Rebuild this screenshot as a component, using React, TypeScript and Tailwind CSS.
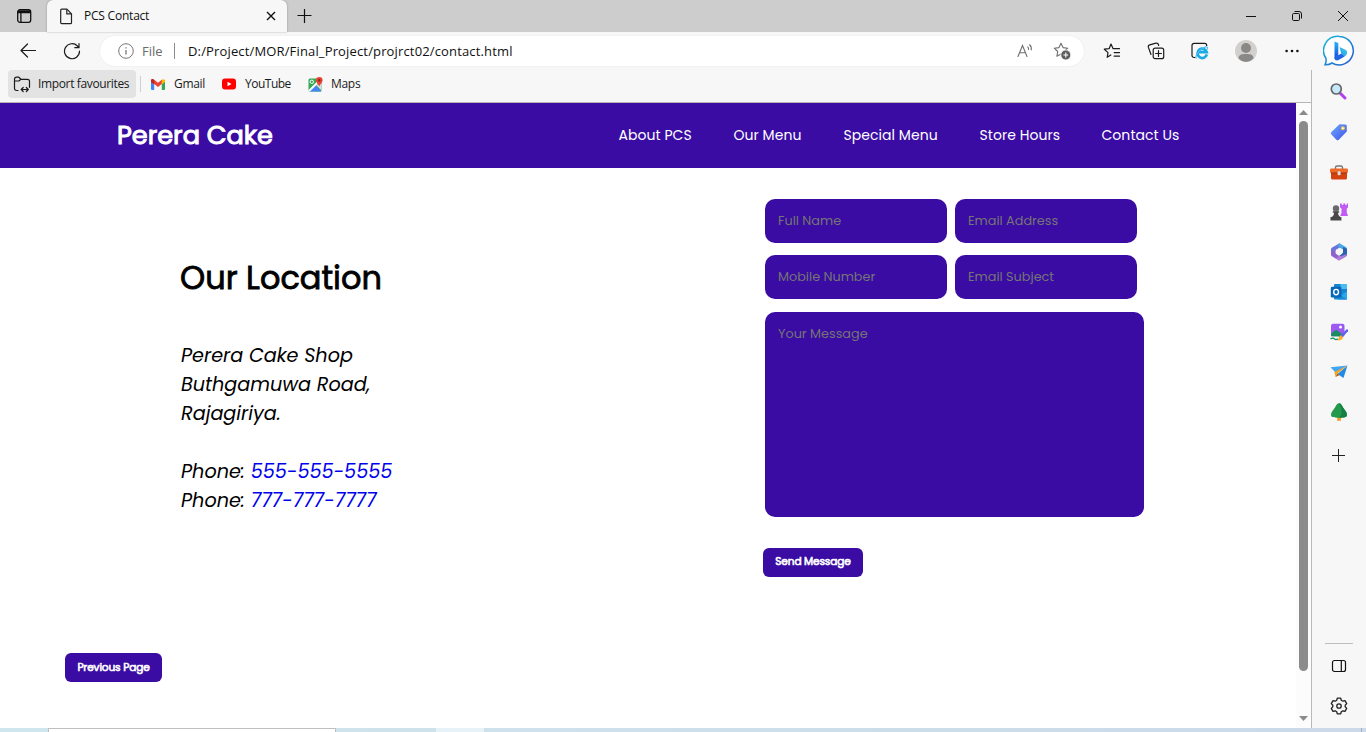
import React from "react";

const INK = "#1b1b1b";

function TabStrip() {
  return (
    <div className="flex h-8 shrink-0 items-center bg-[#cdcdcd]">
      <div className="flex w-[47px] items-center justify-center">
        <svg width="16" height="16" viewBox="0 0 16 16" fill="none" stroke="#111" strokeWidth="1.3">
          <rect x="1.7" y="1.7" width="13" height="12.6" rx="2.2" />
          <path d="M2.600 3h11.200v1.500H2.600z" fill="#111" />
          <path d="M4.9 5v9" />
        </svg>
      </div>
      <div className="flex h-8 w-[240px] items-center rounded-t-md bg-[#f7f7f7] pl-3 shadow-[0_0_2px_rgba(0,0,0,0.35)]">
        <svg width="14" height="17" viewBox="0 0 14 17" fill="none" stroke="#222" strokeWidth="1.2" strokeLinejoin="round">
          <path d="M1.7 2.2a1 1 0 0 1 1-1h5.2l4.6 4.6v8.9a1 1 0 0 1-1 1H2.7a1 1 0 0 1-1-1z" />
          <path d="M7.8 1.4v4.5h4.5" />
        </svg>
        <span className="ml-[11px] w-[178px] whitespace-nowrap text-[12px] leading-4 tracking-[-0.22px] text-[#111]">PCS Contact</span>
        <svg width="10" height="10" viewBox="0 0 10 10" stroke="#111" strokeWidth="1.4" className="ml-1">
          <path d="M1 1l8 8M9 1L1 9" />
        </svg>
      </div>
      <svg width="16" height="16" viewBox="0 0 16 16" stroke="#111" strokeWidth="1.2" className="ml-[10px]">
        <path d="M7.5 1v14M.5 7.5h14" />
      </svg>
      <div className="ml-auto flex">
        <div className="flex w-[46px] items-center justify-center">
          <svg width="10" height="12" viewBox="0 0 10 12" stroke="#111"><path d="M0 6.5h10" /></svg>
        </div>
        <div className="flex w-[46px] items-center justify-center">
          <svg width="12" height="12" viewBox="0 0 12 12" fill="none" stroke="#111">
            <rect x="1.5" y="3.5" width="7" height="7" rx="1.2" />
            <path d="M3.5 1.5H8a2.5 2.5 0 0 1 2.5 2.5v4.5" />
          </svg>
        </div>
        <div className="flex w-[46px] items-center justify-center">
          <svg width="12" height="12" viewBox="0 0 12 12" stroke="#111"><path d="M1 1l10 10M11 1L1 11" /></svg>
        </div>
      </div>
    </div>
  );
}

const STAR = "M8 1.3l2 4.3 4.7.6-3.4 3.3.8 4.7L8 12l-4.1 2.2.8-4.7L1.3 6.2 6 5.6z";

function Toolbar() {
  return (
    <div className="flex h-[38px] shrink-0 items-center pl-[6px]">
      <div className="flex w-11 items-center justify-center">
        <svg width="18" height="16" viewBox="0 0 18 16" fill="none" stroke={INK} strokeWidth="1.2" strokeLinecap="round" strokeLinejoin="round">
          <path d="M16.500 7.500H2M8.500 1L2 7.500 8.500 14" />
        </svg>
      </div>
      <div className="flex w-11 items-center justify-center">
        <svg width="18" height="18" viewBox="0 0 18 18" fill="none" stroke={INK} strokeWidth="1.2" strokeLinecap="round" strokeLinejoin="round">
          <path d="M16.5 9.2A7.5 7.5 0 1 1 14.4 4L16 5.7M16 1.5v4.2h-4.2" />
        </svg>
      </div>
      <div className="ml-[6px] flex h-[30px] w-[984px] shrink-0 items-center rounded-full bg-white pl-[18px] shadow-[0_0_2px_rgba(0,0,0,0.08)]">
        <svg width="16" height="16" viewBox="0 0 16 16" fill="none" stroke="#777">
          <circle cx="8" cy="8" r="7.3" />
          <path d="M8 7v4.6M8 4.2v1.3" strokeWidth="1.3" />
        </svg>
        <span className="ml-2 w-8 whitespace-nowrap text-[13px] leading-4 text-[#6a6a6a]">File</span>
        <span className="h-4 w-px bg-[#8a8a8a]" />
        <span className="ml-[13px] whitespace-nowrap text-[13px] leading-4 tracking-[0.15px] text-[#111]">D:/Project/MOR/Final_Project/projrct02/contact.html</span>
        <div className="ml-auto flex items-center pr-[13px]">
          <svg width="17" height="16" viewBox="0 0 17 16" fill="none" stroke="#6f6f6f" strokeWidth="1.1" strokeLinecap="round">
            <path d="M1 13.500L5.500 2.500l4.500 11M2.500 9.700h6M10.800 3.800c.8.800.9 1.700.7 2.700M12.600 1.800c1.600 1.300 2 3.100 1.600 5.100" />
          </svg>
          <svg width="18" height="18" viewBox="0 0 18 18" fill="none" stroke="#6f6f6f" strokeWidth="1.1" strokeLinejoin="round" className="ml-[19px]">
            <path d={STAR} />
            <circle cx="12.8" cy="13" r="5" fill="#5e5e5e" stroke="#fff" strokeWidth=".8" />
            <path d="M12.8 10.6v4.8M10.4 13h4.8" stroke="#fff" />
          </svg>
        </div>
      </div>
      <div className="ml-[6px] flex w-11 items-center justify-center">
        <svg width="18" height="16" viewBox="0 0 18 16" fill="none" stroke={INK} strokeWidth="1.2" strokeLinejoin="round" strokeLinecap="round">
          <path d="M7.800 12l-3.600 2.300.8-4.700L1.300 6.200l4.800-.5L8 1l2.100 4.700h6.400M11.200 9.600h5.300M11.200 13.200h5.300" />
        </svg>
      </div>
      <div className="flex w-11 items-center justify-center">
        <svg width="18" height="18" viewBox="0 0 18 18" fill="none" stroke={INK} strokeWidth="1.2" strokeLinecap="round">
          <path d="M4 12.500L1.400 5.400a2 2 0 0 1 1.300-2.500L8.900 1.200a2 2 0 0 1 2.500 1.300l.3 1" />
          <rect x="6.200" y="6.200" width="10.500" height="10.500" rx="2" fill="#f7f7f7" />
          <path d="M11.5 8.600v5.800M8.600 11.5h5.800" />
        </svg>
      </div>
      <div className="flex w-11 items-center justify-center">
        <svg width="18" height="18" viewBox="0 0 18 18" fill="none">
          <path d="M4.500 15.500H3a2 2 0 0 1-2-2V3.400a2 2 0 0 1 2-2h10.700a2 2 0 0 1 2 2V4" stroke={INK} strokeWidth="1.200" />
          <path d="M15.800 12.400A4.700 4.700 0 1 1 15.800 10.200H7.500" stroke="#19a9e5" strokeWidth="2.700" />
          <path d="M5.500 16.500c-2.200-1.100 1.800-8 7.100-10.700 3.200-1.600 4.600-.9 3.800 1.600" stroke="#48bdf0" strokeWidth="1.200" />
        </svg>
      </div>
      <div className="flex w-12 items-center justify-center">
        <svg width="22" height="22" viewBox="0 0 22 22">
          <circle cx="11" cy="11" r="11" fill="#d2d0ce" />
          <circle cx="11" cy="8" r="5" fill="#8a8886" />
          <path d="M3.5 18.5c.4-4 3-4.400 7.5-4.400s7.1.4 7.5 4.400A11 11 0 0 1 11 22a11 11 0 0 1-7.500-3.500z" fill="#8a8886" />
        </svg>
      </div>
      <div className="ml-[3px] flex w-[38px] items-center justify-center">
        <svg width="14" height="4" viewBox="0 0 14 4" fill="#111"><circle cx="1.6" cy="2" r="1.300" /><circle cx="7" cy="2" r="1.300" /><circle cx="12.400" cy="2" r="1.300" /></svg>
      </div>
    </div>
  );
}

function Bookmarks() {
  return (
    <div className="flex h-[33px] shrink-0 items-start border-b border-[#b5b5b5] pl-2 text-[12px] leading-7 text-[#1a1a1a]">
      <div className="flex h-7 w-32 items-center rounded-sm bg-[#e3e3e3] pl-[5px]">
        <svg width="18" height="17" viewBox="0 0 18 17" fill="none" stroke={INK} strokeWidth="1.200" strokeLinejoin="round" strokeLinecap="round">
          <path d="M5 14.500H3.500a2 2 0 0 1-2-2V3.200a2 2 0 0 1 2-2h2.300L8 3.300h6.500a2 2 0 0 1 2 2v6M1.600 5h4.200L8 3.300M8.500 13.500h6.500M10.200 11.500l-2 2 2 2M13.300 11.500l2 2-2 2" />
        </svg>
        <span className="ml-[7px] whitespace-nowrap tracking-[-0.36px]">Import favourites</span>
      </div>
      <span className="ml-[4px] mt-[6px] h-4 w-px bg-[#cfcfcf]" />
      <div className="ml-[10px] flex w-[71px] items-center">
        <svg width="14" height="11" viewBox="0 0 14 11">
          <path d="M0 1.500V10a1 1 0 0 0 1 1h2.200V4.800L1.500 1z" fill="#4285f4" />
          <path d="M14 1.500V10a1 1 0 0 1-1 1h-2.200V4.800L12.500 1z" fill="#34a853" />
          <path d="M0 1.800C0 0 1.700-.3 2.800.6L7 3.800 11.200.6 10.800 5 7 8 3.200 5 0 3z" fill="#ea4335" />
          <path d="M10.800 1C12.400-.4 14 .2 14 1.800V3l-3.200 2.300z" fill="#fbbc04" />
          <path d="M0 1.800C0 .8.800.1 1.600.1L3.200 1v4.200L0 3z" fill="#c5221f" />
        </svg>
        <span className="ml-[9px] tracking-[-0.3px]">Gmail</span>
      </div>
      <div className="flex w-[86px] items-center">
        <svg width="14" height="12" viewBox="0 0 14 12"><rect y=".5" width="14" height="11" rx="3" fill="#f00" /><path d="M5.500 3.700v4.600L9.500 6z" fill="#fff" /></svg>
        <span className="ml-[9px] tracking-[-0.5px]">YouTube</span>
      </div>
      <div className="flex items-center">
        <svg width="15" height="15" viewBox="0 0 15 15">
          <rect x=".5" y="1.500" width="13" height="13" rx="1.500" fill="#34a853" />
          <path d="M1 14.500L7.500 8l6 6.500z" fill="#4285f4" />
          <path d="M1 14L13 2" stroke="#fff" strokeWidth="2" />
          <path d="M8 8l5.500 5.500V6z" fill="#d6dce2" />
          <circle cx="3.800" cy="4.800" r="1.700" fill="none" stroke="#fff" />
          <path d="M11.200 9.500C10.500 7 8 6 8 3.300a3.300 3.300 0 0 1 6.600 0C14.600 6 12 7 11.200 9.500z" fill="#ea4335" />
          <circle cx="11.300" cy="3.300" r="1.200" fill="#81271d" />
        </svg>
        <span className="ml-2 tracking-[-0.3px]">Maps</span>
      </div>
    </div>
  );
}

const NAV = [
  { label: "About PCS", cls: "w-[115px]" },
  { label: "Our Menu", cls: "w-[110px]" },
  { label: "Special Menu", cls: "w-[136px]" },
  { label: "Store Hours", cls: "w-[122px]" },
  { label: "Contact Us", cls: "w-[90px]" },
];

const FIELD = "block rounded-[10px] bg-[#3a0ca3] pl-[13px] text-[12.800px] text-white outline-none placeholder:text-[#757575] placeholder:opacity-100";
const BUTTON = "block h-[29px] whitespace-nowrap rounded-md bg-[#3a0ca3] text-[10.600px] tracking-[-0.15px] text-white [-webkit-text-stroke:0.6px_white]";

function ContactPage() {
  return (
    <div className="flex w-[1296px] flex-col bg-white font-['Poppins','Inter',sans-serif] [font-feature-settings:'cv11']">
      <header className="flex h-[65px] shrink-0 items-center bg-[#3a0ca3] pl-[117px] text-white">
        <h1 className="w-[501.500px] whitespace-nowrap text-[25.600px] font-normal [-webkit-text-stroke:1px_white]">Perera Cake</h1>
        <nav className="flex text-[14px] tracking-[0.05px]">
          {NAV.map((n) => (
            <a key={n.label} className={"whitespace-nowrap " + n.cls}>{n.label}</a>
          ))}
        </nav>
      </header>
      <main className="flex h-[485px] shrink-0 pl-[180px]">
        <section className="w-[585px] pt-[86px]">
          <h2 className="text-[32px] font-normal leading-[48px] text-black [-webkit-text-stroke:0.8px_black]">Our Location</h2>
          <address className="ml-px mt-[39px] whitespace-nowrap text-[19.200px] italic leading-[29px] text-black">
            Perera Cake Shop<br />Buthgamuwa Road,<br />Rajagiriya.<br /><br />
            Phone: <a className="text-[#0000ee]">555-555-5555</a><br />
            Phone: <a className="text-[#0000ee]">777-777-7777</a>
          </address>
        </section>
        <form className="pt-[31px]">
          <div className="grid grid-cols-[182px_182px] gap-x-2 gap-y-3">
            {["Full Name", "Email Address", "Mobile Number", "Email Subject"].map((p) => (
              <input key={p} placeholder={p} className={"h-11 w-[182px] " + FIELD} />
            ))}
          </div>
          <textarea placeholder="Your Message" className={"mt-[13px] h-[205px] w-[379px] resize-none pt-3 leading-5 " + FIELD} />
          <button type="button" className={"-ml-0.5 mt-[31px] w-[100px] pb-[2px] " + BUTTON}>Send Message</button>
        </form>
      </main>
      <div className="pl-[65px]">
        <button type="button" className={"w-[97px] " + BUTTON}>Previous Page</button>
      </div>
    </div>
  );
}

function ScrollBar() {
  return (
    <div className="flex w-[15px] flex-col items-center bg-[#fcfcfc] pt-[7px]">
      <svg width="9" height="5" viewBox="0 0 9 5"><path d="M4.500 0L9 5H0z" fill="#8b8b8b" /></svg>
      <div className="mt-[6px] h-[550px] w-[9px] rounded-full bg-[#8b8b8b]" />
      <svg width="9" height="5" viewBox="0 0 9 5" className="mt-[45px]"><path d="M4.500 5L9 0H0z" fill="#8b8b8b" /></svg>
    </div>
  );
}

function BingIcon() {
  return (
    <svg width="32" height="32" viewBox="0 0 32 32" fill="none">
      <defs>
        <linearGradient id="ring" x1="0" y1="0" x2="1" y2="1"><stop stopColor="#18b9dc" /><stop offset="1" stopColor="#2459cf" /></linearGradient>
        <linearGradient id="bb" x1="0" y1="0" x2="0" y2="1"><stop stopColor="#20b8f5" /><stop offset="1" stopColor="#174ae4" /></linearGradient>
        <linearGradient id="bc" x1="0" y1="1" x2="1" y2="0"><stop stopColor="#2476e8" /><stop offset="1" stopColor="#39d1e8" /></linearGradient>
      </defs>
      <path d="M16.500 1.500A14.200 14.200 0 1 1 9 28c-2.300 1.500-4.700 2-7 1.800 1.200-2.100 1.300-4.200 1-6.300A14.200 14.200 0 0 1 16.500 1.500z" fill="#fff" stroke="url(#ring)" strokeWidth="1.500" />
      <path d="M11.500 6.500l3.800 1.500v12.500l-3.800 3z" fill="url(#bb)" />
      <path d="M16.500 12l6 2.800c2.200 1.400 2 4.500 0 6L15.300 25c-2 1-3.800-.2-3.800-2l6.800-4z" fill="url(#bc)" />
      <path d="M11.500 22.500l3.800-2.200 2.500-1.500 3.700 2.600L15.300 25c-2 1-3.800-.4-3.800-2.500z" fill="#2464e4" />
    </svg>
  );
}

const SIDE_ICONS: React.ReactNode[] = [
  <>
    <path d="M10.500 10.500l4.500 4.500" stroke="#b43df0" strokeWidth="3" strokeLinecap="round" />
    <circle cx="6.300" cy="6" r="5" fill="#c5e8fb" stroke="#666" strokeWidth="1.700" />
  </>,
  <>
    <path d="M9.500 1.200l5.800.2a1.500 1.500 0 0 1 1.500 1.500v5.600L8.800 16.700a1.700 1.700 0 0 1-2.400 0L1.400 11.500a1.700 1.700 0 0 1 0-2.400z" fill="url(#tag)" />
    <circle cx="12.900" cy="5.200" r="1.500" fill="#fff" stroke="#f5c431" strokeWidth="1.100" />
  </>,
  <>
    <path d="M5.500 6V4.500A1.500 1.500 0 0 1 7 3h4a1.500 1.500 0 0 1 1.500 1.500V6" fill="none" stroke="#777" strokeWidth="1.400" />
    <rect x="1" y="6" width="16" height="10.500" rx="1.500" fill="#d4430f" />
    <rect y="5.500" width="18" height="4.500" rx="1.200" fill="#ed6a28" />
    <path d="M1 10h16" stroke="#9c2c08" />
    <rect x="7.600" y="8.200" width="3" height="4" rx="1" fill="#ddd" />
  </>,
  <>
    <path d="M10 .5h1.800v1.500h1.500V.5h2v1.500h1.500V.5H18v4l-1.200 1v4.500l1 1.700v1.300h-7.300v-1.300l1-1.700V5.500l-1.500-1z" fill="#c05cf5" />
    <circle cx="6" cy="5.500" r="3.200" fill="#6a6a6a" />
    <path d="M2.800 8.300h6.400v1.500H8c.1 2 .8 3 2.200 4.300h1.200v3.400H.5v-3.400h1.200c1.600-1.200 2.300-2.300 2.400-4.300H2.800z" fill="#484848" />
  </>,
  <>
    <path d="M9.500.3L1.800 4.700A1.800 1.800 0 0 0 1 6.200v5.600l4.500-2V7L12 3.300z" fill="#6a74dc" />
    <path d="M9.500.3l6.700 4A1.800 1.800 0 0 1 17 5.800v6L13 9V6.500L7.500 3.500z" fill="#48a9e6" />
    <path d="M17 5.800v6a1.800 1.800 0 0 1-.8 1.500l-3.700 2.200-3.500-3 4-3V4z" fill="#2b62b4" />
    <path d="M1 11.800c0 .6.300 1.200.8 1.500l6.400 4c.5.300 1 .3 1.600 0l6.400-4L17 11l-7 2.500-4.500-3.700z" fill="#b07bda" />
    <path d="M1 8v4l5 3.200 3.500-2.500L5.500 10V7z" fill="#8b65cb" />
    <path d="M9 5.500l3.200 1.900v3.400L9 12.700l-3.200-1.900V7.400z" fill="#f7f7f7" />
  </>,
  <>
    <rect x="4" y="1" width="13" height="15.500" rx="1" fill="#1685d1" />
    <path d="M10.500 1H17v5h-6.500z" fill="#49bdf0" />
    <path d="M8 9h9v7.500H8z" fill="#168bd8" /><path d="M17 8.500l-6 4 6 4z" fill="#28a8ea" />
    <rect x=".8" y="3.800" width="10.600" height="10.600" rx="1.200" fill="#0868b8" />
    <ellipse cx="6.100" cy="9.100" rx="2.400" ry="2.700" fill="none" stroke="#fff" strokeWidth="1.400" />
  </>,
  <>
    <rect x="1" y=".8" width="13.500" height="13" rx="2" fill="#9c5af2" />
    <circle cx="10.500" cy="4" r="1.500" fill="#fff" />
    <path d="M1 11l4-3.500a2 2 0 0 1 2.600 0l5 4.300-2 2H2.500A1.500 1.500 0 0 1 1 12.300z" fill="#198c61" />
    <path d="M0 13.500h9l-1 4.500H0z" fill="#f7f7f7" />
    <path d="M.5 16c2-1.500 3-1.500 4.500.3 1 .8 2 .2 3-.4" stroke="#178f65" fill="none" strokeWidth="1.300" />
    <path d="M17 7.500l-5 5.500" stroke="#5d62e8" strokeWidth="2.500" strokeLinecap="round" />
    <path d="M11 12.200l2 2c-.5 2.500-2.800 3.500-5.500 3.200 1.400-1 1-4.500 3.500-5.200z" fill="#f9ae24" />
  </>,
  <>
    <path d="M.5 4.200L17.500 2.500 5.500 9.500z" fill="#41a7f2" />
    <path d="M17.500 2.500L13.500 15 7.500 11z" fill="#218be5" />
    <path d="M17.500 2.500L7.500 10.500l-2 3.500-1-5z" fill="#f5a321" />
    <path d="M7.500 10.500l2.200 1.600-4.200 2z" fill="#a95f15" />
  </>,
  <>
    <rect x="7.200" y="13" width="3.700" height="4.800" fill="#f59b22" />
    <path d="M9 .3c1.800 0 2.700 2 4 4.200 1.500 2.300 4 4.500 4 7.200 0 2.200-2 3-8 3s-8-.8-8-3c0-2.700 2.500-4.900 4-7.200C6.300 2.300 7.200.3 9 .3z" fill="#23994b" />
    <path d="M9 .3c1.800 0 2.700 2 4 4.200 1.500 2.300 4 4.500 4 7.200 0 2.200-2 3-8 3 4-3 3-9 0-14.400z" fill="#168042" />
  </>,
];

function SideBar() {
  return (
    <aside className="flex w-[55px] flex-col bg-[#f7f7f7]">
      <div className="flex h-[38px] shrink-0 items-center justify-center"><BingIcon /></div>
      <div className="flex grow flex-col items-center border-l border-[#b9b9b9] pt-[2px]">
        {SIDE_ICONS.map((icon, i) => (
          <div key={i} className="flex h-10 items-center justify-center">
            <svg width="18" height="18" viewBox="0 0 18 18">
              <defs><linearGradient id="tag" x1="0" y1="0" x2="1" y2="1"><stop stopColor="#6aaaff" /><stop offset="1" stopColor="#4453ea" /></linearGradient></defs>
              {icon}
            </svg>
          </div>
        ))}
        <svg width="13" height="13" viewBox="0 0 13 13" stroke="#222" className="mr-px mt-[17px]"><path d="M6.500 0v13M0 6.500h13" /></svg>
        <span className="mt-auto h-px w-7 bg-[#bdbdbd]" />
        <svg width="16" height="14" viewBox="0 0 16 14" fill="none" stroke="#111" strokeWidth="1.200" className="mt-[15px]">
          <rect x="1.500" y="1.500" width="13" height="11" rx="2" /><path d="M10.300 1.500v11" />
        </svg>
        <svg width="18" height="18" viewBox="0 0 18 18" fill="none" stroke="#222" strokeWidth="1.300" strokeLinejoin="round" className="mb-[13px] mt-[24px]">
          <path d="M7.300 1.200h3.400l.6 2.100 1.500.9 2.200-.6 1.700 3-1.500 1.600v1.600l1.500 1.600-1.700 3-2.200-.6-1.500.9-.6 2.100H7.300l-.6-2.100-1.500-.9-2.200.6-1.700-3 1.500-1.600V8.200L1.300 6.600l1.700-3 2.200.6 1.500-.9z" />
          <circle cx="9" cy="9" r="2.200" />
        </svg>
      </div>
    </aside>
  );
}

export default function App() {
  return (
    <div className="flex h-[732px] w-[1366px] flex-col overflow-hidden bg-[#f7f7f7] font-['Segoe_UI','Open_Sans',sans-serif]">
      <TabStrip />
      <div className="flex h-[696px] shrink-0">
        <div className="flex w-[1311px] flex-col">
          <Toolbar />
          <Bookmarks />
          <div className="flex grow">
            <ContactPage />
            <ScrollBar />
          </div>
        </div>
        <SideBar />
      </div>
      <div className="flex h-1 shrink-0 bg-gradient-to-r from-[#cfe6ee] to-[#cbd9e8]">
        <div className="ml-12 h-1 w-72 border-x border-t border-[#bfbfbf] bg-white" />
        <div className="ml-[100px] h-1 w-12 bg-[#e6f1f8]" />
        <div className="ml-auto mr-1 h-1 w-px bg-[#9fb0c2]" />
      </div>
    </div>
  );
}
